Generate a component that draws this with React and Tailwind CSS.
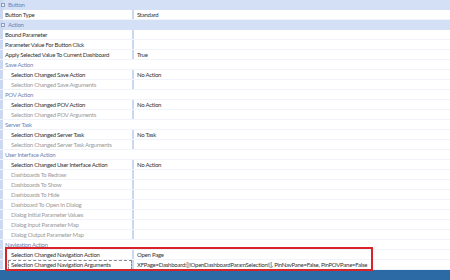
import React from 'react';

// Property grid rows: kind = header | group | item | sub | subOff
const rows = [
  { kind: 'header', name: 'Button' },
  { kind: 'item', name: 'Button Type', value: 'Standard' },
  { kind: 'header', name: 'Action' },
  { kind: 'item', name: 'Bound Parameter' },
  { kind: 'item', name: 'Parameter Value For Button Click' },
  { kind: 'item', name: 'Apply Selected Value To Current Dashboard', value: 'True' },
  { kind: 'group', name: 'Save Action' },
  { kind: 'sub', name: 'Selection Changed Save Action', value: 'No Action' },
  { kind: 'subOff', name: 'Selection Changed Save Arguments' },
  { kind: 'group', name: 'POV Action' },
  { kind: 'sub', name: 'Selection Changed POV Action', value: 'No Action' },
  { kind: 'subOff', name: 'Selection Changed POV Arguments' },
  { kind: 'group', name: 'Server Task' },
  { kind: 'sub', name: 'Selection Changed Server Task', value: 'No Task' },
  { kind: 'subOff', name: 'Selection Changed Server Task Arguments' },
  { kind: 'group', name: 'User Interface Action' },
  { kind: 'sub', name: 'Selection Changed User Interface Action', value: 'No Action' },
  { kind: 'subOff', name: 'Dashboards To Redraw' },
  { kind: 'subOff', name: 'Dashboards To Show' },
  { kind: 'subOff', name: 'Dashboards To Hide' },
  { kind: 'subOff', name: 'Dashboard To Open In Dialog' },
  { kind: 'subOff', name: 'Dialog Initial Parameter Values' },
  { kind: 'subOff', name: 'Dialog Input Parameter Map' },
  { kind: 'subOff', name: 'Dialog Output Parameter Map' },
  { kind: 'group', name: 'Navigation Action' },
  { kind: 'sub', name: 'Selection Changed Navigation Action', value: 'Open Page' },
  {
    kind: 'sub',
    name: 'Selection Changed Navigation Arguments',
    value: 'XFPage=Dashboard:[|!OpenDashboardParamSelection!|], PinNavPane=False, PinPOVPane=False',
    focused: true,
  },
];

const Row = ({ row }) => {
  if (row.kind === 'header') {
    return (
      <div className="flex h-[10px] bg-[#d4e0f6] items-center">
        <div className="w-[3px] h-full bg-[#cbd8f0]" />
        <span className="w-[4px] h-[4px] ml-[-2px] mr-[3px] border border-[#8d9fc0] bg-[#e9eef8]" />
        <span className="text-[#6a84b8] leading-none">{row.name}</span>
      </div>
    );
  }

  if (row.kind === 'group') {
    return (
      <div className="flex h-[10px] items-center border-b border-[#f1f3fa]">
        <div className="w-[3px] h-full bg-[#cbd8f0]" />
        <span className="pl-[2px] text-[#6a84b8] leading-none">{row.name}</span>
      </div>
    );
  }

  const indent = row.kind === 'item' ? 'pl-[2px]' : 'pl-[8px]';
  const color = row.kind === 'subOff' ? 'text-[#9a9a9a]' : 'text-[#333]';

  return (
    <div className="flex h-[10px] border-b border-[#f1f3fa]">
      <div className="w-[3px] h-full bg-[#cbd8f0] shrink-0" />
      <div className={`w-[129px] shrink-0 flex items-center ${indent}`}>
        <span
          className={`leading-none whitespace-nowrap ${color} ${
            row.focused ? 'w-[122px] outline outline-1 outline-dashed outline-[#8a8a8a] ml-[-2px] pl-[2px] py-[1px]' : ''
          }`}
        >
          {row.name}
        </span>
      </div>
      <div className="w-[2px] h-full bg-[#cbd8f0] shrink-0" />
      <div className="flex-1 flex items-center pl-[3px] whitespace-nowrap text-[#333] leading-none">
        {row.value}
      </div>
    </div>
  );
};

export default function App() {
  return (
    <div
      className="w-[450px] h-[280px] bg-white overflow-hidden flex flex-col text-[6px] tracking-[-0.25px]"
      style={{ fontFamily: 'Lato, "Open Sans", sans-serif' }}
    >
      <div className="relative flex-1">
        {rows.map((r, i) => (
          <Row key={i} row={r} />
        ))}
        {/* red highlight annotation */}
        <div className="absolute left-[5px] top-[247px] w-[368px] h-[24px] border-2 border-[#d8232a]" />
      </div>
      <div className="h-[10px] bg-[#2c6aa5]" />
    </div>
  );
}
